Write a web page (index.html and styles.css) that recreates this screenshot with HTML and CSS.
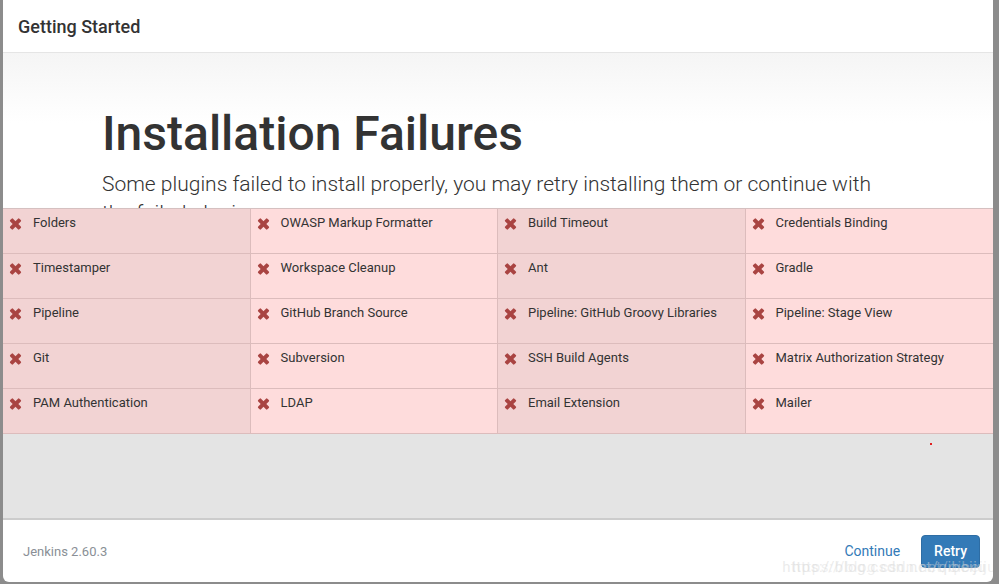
FILE: index.html
```html
<!DOCTYPE html>
<html>
<head>
<meta charset="utf-8">
<link rel="stylesheet" href="styles.css">
</head>
<body>
<div class="modal">
  <div class="modal-header">Getting Started</div>
  <div class="modal-body">
    <div class="intro">
      <h1 class="title">Installation Failures</h1>
      <p class="lead">Some plugins failed to install properly, you may retry installing them or continue with the failed plugins.</p>
    </div>
    <div class="plugins">
      <div class="cell c1"><span class="x"></span>Folders</div>
      <div class="cell c2"><span class="x"></span>OWASP Markup Formatter</div>
      <div class="cell c1"><span class="x"></span>Build Timeout</div>
      <div class="cell c2"><span class="x"></span>Credentials Binding</div>
      <div class="cell c1"><span class="x"></span>Timestamper</div>
      <div class="cell c2"><span class="x"></span>Workspace Cleanup</div>
      <div class="cell c1"><span class="x"></span>Ant</div>
      <div class="cell c2"><span class="x"></span>Gradle</div>
      <div class="cell c1"><span class="x"></span>Pipeline</div>
      <div class="cell c2"><span class="x"></span>GitHub Branch Source</div>
      <div class="cell c1"><span class="x"></span>Pipeline: GitHub Groovy Libraries</div>
      <div class="cell c2"><span class="x"></span>Pipeline: Stage View</div>
      <div class="cell c1"><span class="x"></span>Git</div>
      <div class="cell c2"><span class="x"></span>Subversion</div>
      <div class="cell c1"><span class="x"></span>SSH Build Agents</div>
      <div class="cell c2"><span class="x"></span>Matrix Authorization Strategy</div>
      <div class="cell c1"><span class="x"></span>PAM Authentication</div>
      <div class="cell c2"><span class="x"></span>LDAP</div>
      <div class="cell c1"><span class="x"></span>Email Extension</div>
      <div class="cell c2"><span class="x"></span>Mailer</div>
    </div>
    <div class="filler"><span class="dot"></span></div>
  </div>
  <div class="modal-footer">
    <span class="version">Jenkins 2.60.3</span>
    <div class="actions">
      <a class="link">Continue</a>
      <button class="btn">Retry</button>
    </div>
    <span class="watermark">https://blog.csdn.net/qibeiju</span>
  </div>
</div>
</body>
</html>
```
FILE: styles.css
```css
html, body {
  margin: 0;
  padding: 0;
  height: 100%;
}
body {
  background: #8c8c8c;
  font-family: Roboto, "Liberation Sans", sans-serif;
  color: #333;
  overflow: hidden;
}
.modal {
  margin: -6px 6px 0 3px;
  height: 588px;
  background: #fff;
  border-radius: 0 0 6px 6px;
  display: flex;
  flex-direction: column;
  overflow: hidden;
}
.modal-header {
  padding: 6px 0 0 15px;
  box-sizing: border-box;
  display: flex;
  align-items: center;
  font-size: 18px;
  font-weight: 500;
  color: #333;
  border-bottom: 1px solid #e5e5e5;
  flex: none;
  height: 59px;
}
.modal-body {
  flex: 1;
  display: flex;
  flex-direction: column;
  background: linear-gradient(#f5f5f5, #fff 70px);
  min-height: 0;
}
.intro {
  height: 155px;
  overflow: hidden;
  padding: 0 120px 0 99px;
  flex: none;
  box-sizing: border-box;
}
.title {
  margin: 53px 0 0 0;
  font-size: 48px;
  font-weight: 500;
  line-height: 56px;
  color: #333;
}
.lead {
  margin: 8px 0 0 0;
  font-size: 21px;
  font-weight: 300;
  line-height: 29px;
  color: #333;
}
.plugins {
  display: grid;
  grid-template-columns: repeat(4, 1fr);
  grid-auto-rows: 45px;
  border-top: 1px solid #d5c0c0;
  flex: none;
  box-shadow: 0 2px 3px rgba(0,0,0,0.12);
  position: relative;
}
.cell {
  box-sizing: border-box;
  border-right: 1px solid #dcbcbc;
  border-bottom: 1px solid #dcbcbc;
  padding: 6px 8px 0 7px;
  font-size: 13px;
  line-height: 16px;
  color: #333;
  display: flex;
  align-items: flex-start;
  white-space: nowrap;
}
.cell:nth-child(4n) {
  border-right: none;
}
.c1 { background: #f2d3d3; }
.c2 { background: #fedcdc; }
.x {
  width: 11px;
  height: 11px;
  margin: 3px 12px 0 0;
  flex: none;
  position: relative;
}
.x::before, .x::after {
  content: "";
  position: absolute;
  left: -1px;
  top: 4px;
  width: 13px;
  height: 4px;
  background: #a94442;
  border-radius: 1px;
}
.x::before { transform: rotate(45deg); }
.x::after { transform: rotate(-45deg); }
.filler {
  flex: 1;
  background: #e4e4e4;
  border-bottom: 2px solid #ccc;
  position: relative;
}
.dot {
  position: absolute;
  left: 927px;
  top: 9px;
  width: 2px;
  height: 2px;
  background: #e02020;
}
.modal-footer {
  flex: none;
  height: 62px;
  display: flex;
  align-items: center;
  justify-content: space-between;
  padding: 0 13px 0 20px;
  position: relative;
}
.version {
  font-size: 13px;
  color: #8a8f96;
  margin-top: 1px;
}
.actions {
  display: flex;
  align-items: center;
  gap: 21px;
}
.link {
  color: #337ab7;
  font-size: 14px;
  cursor: pointer;
}
.btn {
  background: #337ab7;
  color: #fff;
  border: 1px solid #2e6da4;
  border-radius: 4px;
  font-family: Roboto, "Liberation Sans", sans-serif;
  font-size: 14px;
  height: 33px;
  padding: 0 12px;
  font-weight: 500;
}
.watermark {
  position: absolute;
  right: 7px;
  bottom: 6px;
  font-size: 15px;
  color: rgba(215,215,215,0.5);
  text-shadow: 10px 0 rgba(215,215,215,0.4);
  letter-spacing: 0.5px;
}
```
